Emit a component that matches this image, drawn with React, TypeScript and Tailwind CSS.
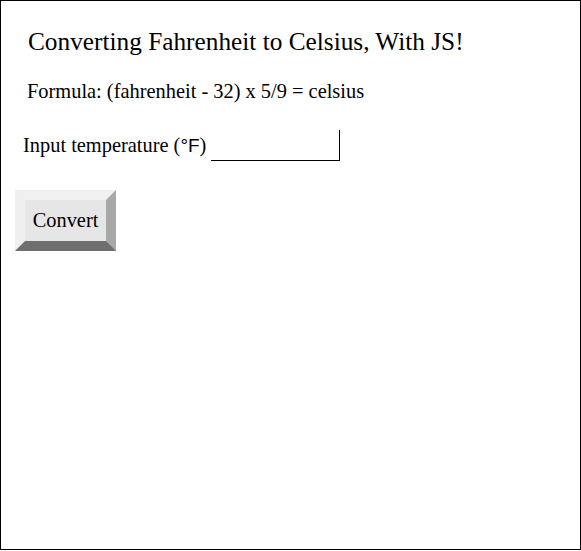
import React, { useState } from 'react'

export default function App() {
  const [fahrenheit, setFahrenheit] = useState('')

  return (
    <div className="w-[581px] h-[550px] border border-black bg-white text-black" style={{ fontFamily: '"Liberation Serif", serif' }}>
      <h1 className="ml-[27px] mt-[26px] text-[25.3px] leading-[28px]">Converting Fahrenheit to Celsius, With JS!</h1>
      <p className="ml-[26px] mt-[24px] text-[20.4px] leading-[24px]">Formula: (fahrenheit - 32) x 5/9 = celsius</p>
      <div className="ml-[22px] mt-[27px] flex items-end">
        <label htmlFor="temp" className="text-[20.4px] leading-[24px] pb-[3px]">
          Input temperature (<span className="font-['Liberation_Sans',sans-serif] text-[19px]">°F</span>)
        </label>
        <input
          id="temp"
          value={fahrenheit}
          onChange={(e) => setFahrenheit(e.target.value)}
          className="ml-[5px] w-[129px] h-[31px] border-r border-b border-black outline-none"
        />
      </div>
      <button className="ml-[14px] mt-[29px] w-[101px] h-[61px] bg-[#e6e6e6] border-[10px] border-t-[#f0f0f0] border-l-[#efefef] border-r-[#a8a8a8] border-b-[#6f6f6f] text-[20.4px]">
        Convert
      </button>
    </div>
  )
}
